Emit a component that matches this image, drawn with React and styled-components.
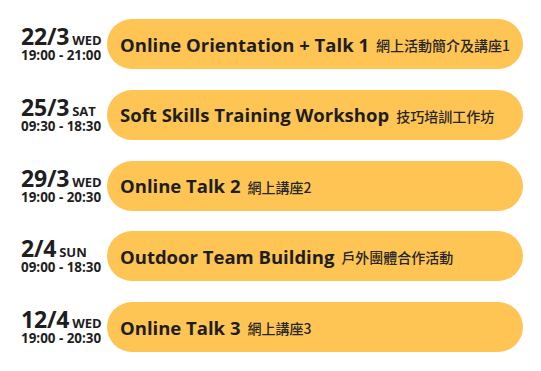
import React from "react";
import styled, { createGlobalStyle } from "styled-components";

const GlobalStyle = createGlobalStyle`
  html, body {
    margin: 0;
    padding: 0;
    background: #ffffff;
  }
  body {
    font-family: "Open Sans", "Noto Sans CJK TC", sans-serif;
    color: #1e1e1e;
  }
`;

const Schedule = styled.div`
  display: flex;
  flex-direction: column;
  gap: 20.75px;
  padding: 19px 0 0 21px;
  width: 502px;
`;

const Row = styled.div`
  display: flex;
  align-items: center;
`;

const When = styled.div`
  width: 86px;
  flex-shrink: 0;
  display: flex;
  flex-direction: column;
  font-weight: 700;
  margin-top: -2px;
`;

const DateLine = styled.div`
  display: flex;
  align-items: baseline;
  gap: 3px;
  height: 24px;
`;

const Day = styled.span`
  font-size: 23px;
  line-height: 24px;
  letter-spacing: -0.2px;
`;

const Weekday = styled.span`
  font-size: 13px;
  line-height: 14px;
`;

const Time = styled.div`
  font-size: 13.4px;
  line-height: 14px;
`;

const Pill = styled.div`
  flex: 1;
  height: 50px;
  border-radius: 25px;
  background: #fec454;
  display: flex;
  align-items: center;
  padding: 0 13px;
  gap: 7px;
`;

const Title = styled.span`
  font-size: 18.5px;
  font-weight: 700;
  color: #1e1e1e;
  white-space: nowrap;
`;

const Chinese = styled.span`
  font-family: "Noto Sans CJK TC", "Noto Sans", sans-serif;
  font-size: 14px;
  font-weight: 500;
  color: #262626;
  white-space: nowrap;
  margin-top: 2px;
`;

const events = [
  { day: "22/3", week: "WED", time: "19:00 - 21:00", title: "Online Orientation + Talk 1", zh: "網上活動簡介及講座1" },
  { day: "25/3", week: "SAT", time: "09:30 - 18:30", title: "Soft Skills Training Workshop", zh: "技巧培訓工作坊" },
  { day: "29/3", week: "WED", time: "19:00 - 20:30", title: "Online Talk 2", zh: "網上講座2" },
  { day: "2/4", week: "SUN", time: "09:00 - 18:30", title: "Outdoor Team Building", zh: "戶外團體合作活動" },
  { day: "12/4", week: "WED", time: "19:00 - 20:30", title: "Online Talk 3", zh: "網上講座3" },
];

export default function App() {
  return (
    <>
      <GlobalStyle />
      <Schedule>
        {events.map((e) => (
          <Row key={e.day}>
            <When>
              <DateLine>
                <Day>{e.day}</Day>
                <Weekday>{e.week}</Weekday>
              </DateLine>
              <Time>{e.time}</Time>
            </When>
            <Pill>
              <Title>{e.title}</Title>
              <Chinese>{e.zh}</Chinese>
            </Pill>
          </Row>
        ))}
      </Schedule>
    </>
  );
}
